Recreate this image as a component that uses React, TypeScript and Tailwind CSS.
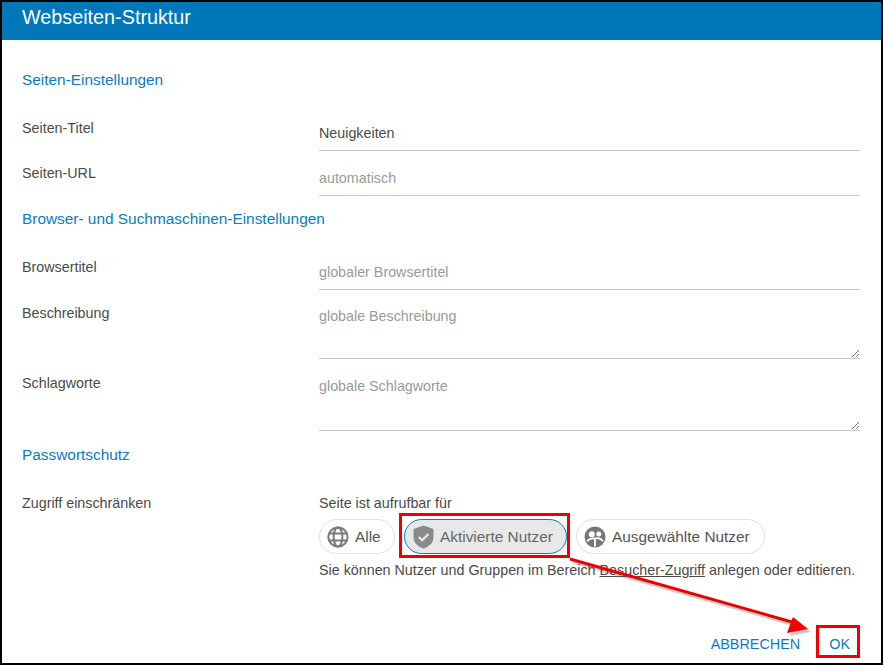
const font = { fontFamily: '"Liberation Sans", Arial, sans-serif' };

function Heading({ children, className = "" }: { children: React.ReactNode; className?: string }) {
  return <div className={`text-[15.4px] leading-[20px] text-[#0a7cc1] ${className}`}>{children}</div>;
}

function Label({ children }: { children: React.ReactNode }) {
  return <div className="w-[297px] shrink-0 text-[14.3px] leading-[20px] text-[#4a4a4a]">{children}</div>;
}

function GlobeIcon() {
  return (
    <svg width="22" height="22" viewBox="0 0 22 22" fill="none" stroke="#7a7a7a" strokeWidth="2">
      <circle cx="11" cy="11" r="9.6" />
      <ellipse cx="11" cy="11" rx="4.4" ry="9.6" />
      <path d="M2.3 7.4h17.4M2.3 14.6h17.4" />
    </svg>
  );
}

function ShieldIcon() {
  return (
    <svg width="21" height="24" viewBox="0 0 21 24">
      <path d="M10.5 0.5 20.5 4v8c0 5.6-4.2 9.8-10 11.5C4.700 21.800 0.500 17.600 0.500 12V4z" fill="#8a8a8a" />
      <path d="M5.800 12l3.400 3.300 6.200-6.400" fill="none" stroke="#e8e8e8" strokeWidth="2.200" />
    </svg>
  );
}

function GroupIcon() {
  return (
    <svg width="22" height="22" viewBox="0 0 22 22">
      <circle cx="11" cy="11" r="10.500" fill="#777777" />
      <circle cx="7.800" cy="8.300" r="3" fill="#ffffff" />
      <circle cx="14.800" cy="8" r="2.500" fill="#ffffff" />
      <path d="M3 15.200c2.500-2.800 5.500-3.300 8-2.600 2.800-.9 5.700-.3 8 2.600M11 12.600v8" fill="none" stroke="#ffffff" strokeWidth="1.800" />
    </svg>
  );
}

export default function App() {
  return (
    <div style={font} className="relative h-[665px] w-[883px] overflow-hidden border-2 border-black bg-white">
      <header className="flex h-[38px] items-start bg-[#0077b9] pl-[20px] pt-[3px] text-[19.8px] leading-[24px] text-white">
        Webseiten-Struktur
      </header>

      <div className="pl-[20px] pr-[21px]">
        <Heading className="pt-[30px]">Seiten-Einstellungen</Heading>

        <div className="mt-[28px] flex h-[45px]">
          <Label>Seiten-Titel</Label>
          <input
            readOnly
            value="Neuigkeiten"
            className="-mt-[4px] h-[37px] w-full border-b border-[#c8c8c8] pt-[2px] text-[14.3px] text-[#4a4a4a] outline-none"
          />
        </div>
        <div className="flex h-[36px]">
          <Label>Seiten-URL</Label>
          <input
            readOnly
            placeholder="automatisch"
            className="-mt-[2px] h-[35px] w-full border-b border-[#c8c8c8] text-[14.3px] outline-none placeholder:text-[#9a9a9a]"
          />
        </div>

        <Heading className="pt-[10px]">Browser- und Suchmaschinen-Einstellungen</Heading>

        <div className="mt-[28px] flex h-[46px]">
          <Label>Browsertitel</Label>
          <input
            readOnly
            placeholder="globaler Browsertitel"
            className="-mt-[4px] h-[37px] w-full border-b border-[#c8c8c8] pt-[2px] text-[14.3px] outline-none placeholder:text-[#9a9a9a]"
          />
        </div>
        <div className="flex h-[70px]">
          <Label>Beschreibung</Label>
          <textarea
            readOnly
            placeholder="globale Beschreibung"
            className="block h-[56px] w-full resize-y border-b border-[#c8c8c8] pt-[3px] text-[14.3px] leading-[20px] outline-none placeholder:text-[#9a9a9a]"
          />
        </div>
        <div className="flex h-[62px]">
          <Label>Schlagworte</Label>
          <textarea
            readOnly
            placeholder="globale Schlagworte"
            className="block h-[58px] w-full resize-y border-b border-[#c8c8c8] pt-[3px] text-[14.3px] leading-[20px] outline-none placeholder:text-[#9a9a9a]"
          />
        </div>

        <Heading className="pt-[10px]">Passwortschutz</Heading>

        <div className="mt-[28px] flex">
          <Label>Zugriff einschränken</Label>
          <div className="text-[14.3px] text-[#4a4a4a]">
            <div className="leading-[20px]">Seite ist aufrufbar für</div>
            <div className="mt-[6px] flex gap-[9px] text-[15.4px] text-[#555555]">
              <div className="flex h-[35px] w-[76px] items-center gap-[6px] rounded-full border border-[#e0e0e0] pl-[7px]">
                <GlobeIcon />
                <span className="pt-[1px]">Alle</span>
              </div>
              <div className="flex h-[35px] w-[163px] items-center gap-[6px] rounded-full border border-[#0a7cc1] bg-[#e8e8e8] pl-[8px] text-[#666666]">
                <ShieldIcon />
                <span className="pt-[1px]">Aktivierte Nutzer</span>
              </div>
              <div className="flex h-[35px] w-[189px] items-center gap-[6px] rounded-full border border-[#e0e0e0] pl-[7px]">
                <GroupIcon />
                <span className="pt-[1px]">Ausgewählte Nutzer</span>
              </div>
            </div>
            <div className="mt-[6px] whitespace-nowrap leading-[20px]">
              Sie können Nutzer und Gruppen im Bereich <span className="underline">Besucher-Zugriff</span> anlegen oder editieren.
            </div>
          </div>
        </div>
      </div>

      <footer className="absolute bottom-[9px] right-[31px] flex items-center gap-[29px] text-[14.400px] leading-[20px] text-[#0a7cc1]">
        <span>ABBRECHEN</span>
        <span>OK</span>
      </footer>

      {/* Annotation overlays */}
      <div className="absolute left-[397px] top-[511px] h-[45px] w-[171px] border-[3px] border-[#f00000]" />
      <div className="absolute left-[814px] top-[623px] h-[33px] w-[44px] border-[3px] border-[#f00000]" />
      <svg className="absolute left-[-2px] top-[-2px]" width="883" height="665" viewBox="0 0 883 665" fill="none">
        <g opacity="0.3" transform="translate(3 3)">
          <path d="M570 559 792 622" stroke="#555555" strokeWidth="3" />
          <path d="M808 629 787 633 793 617z" fill="#555555" />
        </g>
        <path d="M570 559 792 622" stroke="#f00000" strokeWidth="3" />
        <path d="M808 629 787 633 793 617z" fill="#f00000" />
      </svg>
    </div>
  );
}
